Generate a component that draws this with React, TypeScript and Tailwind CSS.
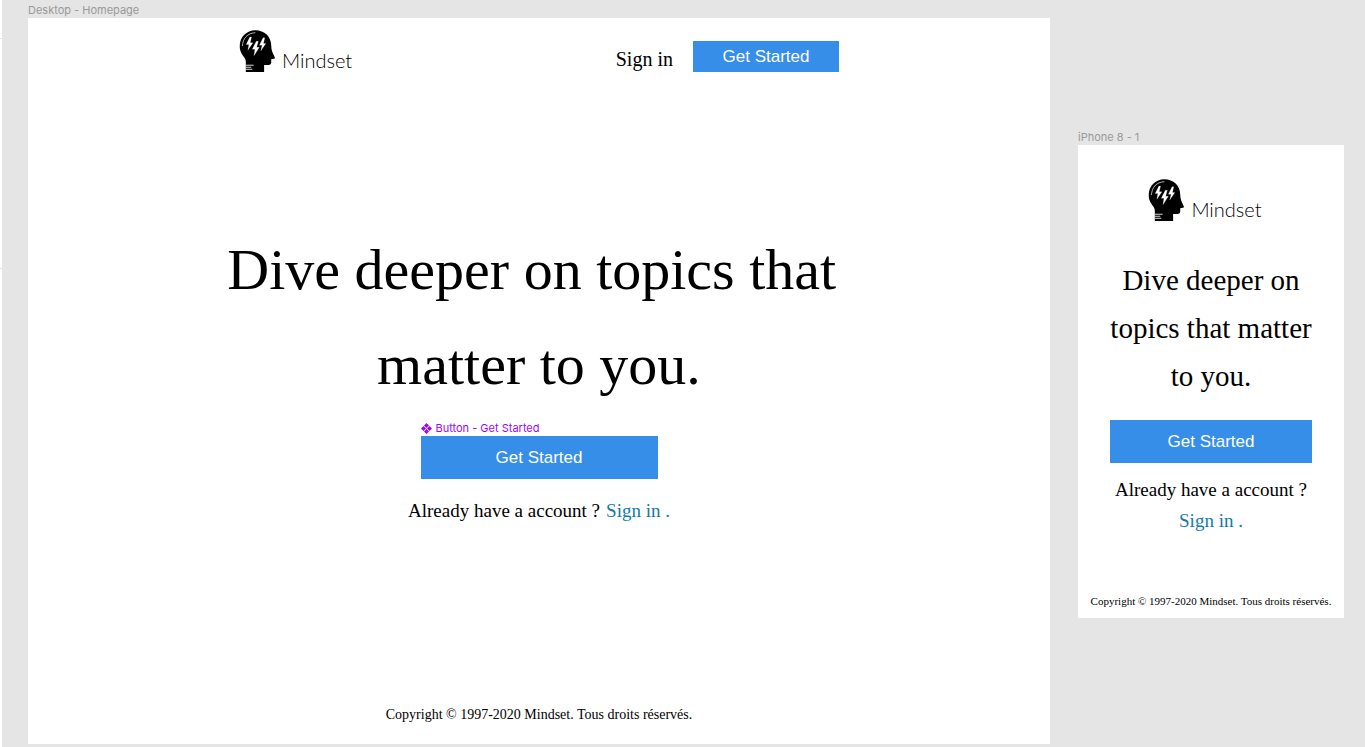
import React from "react";

function HeadMark() {
  return (
    <svg viewBox="0 0 106 124" className="h-[42px] w-9 shrink-0" aria-hidden="true">
      <path
        d="M48 1C75 1 95 20 95 46C95 53 96 59 98 64L106 82Q106 85 103 85L95 86V97Q95 103 88 103H74V124H20V94C20 86 16 82 11 75C5 67 2 58 2 48C2 21 22 1 48 1Z"
        fill="#000"
      />
      <path d="M10 46C11 25 25 9 47 8" fill="none" stroke="#fff" strokeWidth="2" strokeLinecap="round" />
      <path d="M32 21L21 43H29L26 60L41 38H33L37 21Z" fill="#fff" stroke="#fff" strokeWidth="0.5" />
      <path d="M51 33L39 57H47L44 76L60 51H52L57 33Z" fill="#fff" stroke="#fff" strokeWidth="0.5" />
      <path d="M71 23L60 45H68L64 62L79 40H72L76 23Z" fill="#fff" stroke="#fff" strokeWidth="0.5" />
      <path d="M20 104H43M20 110H36M20 116H39" stroke="#fff" strokeWidth="2.5" />
    </svg>
  );
}

function Logo() {
  return (
    <a href="#home" className="flex items-end gap-[7px] text-black">
      <HeadMark />
      <span className="font-[Lato,sans-serif] text-[20px] leading-6 font-light">Mindset</span>
    </a>
  );
}

function GetStarted({ className }: { className: string }) {
  return (
    <button
      type="button"
      className={
        "bg-[#368ee8] text-center font-['Liberation_Sans',sans-serif] text-[17px] text-white " + className
      }
    >
      Get Started
    </button>
  );
}

function Copyright({ className }: { className: string }) {
  return <footer className={"whitespace-nowrap text-center " + className}>Copyright © 1997-2020 Mindset. Tous droits réservés.</footer>;
}

export default function App() {
  return (
    <div className="flex min-h-screen bg-[#e5e5e5] font-['Liberation_Serif',serif] text-black">
      <aside className="w-[2px] shrink-0 bg-white pt-[38px]">
        <div className="h-[231px] border-y border-[#e5e5e5]" />
      </aside>

      <main className="flex flex-1 items-start gap-7 pr-[21px] pl-[26px]">
        <section className="min-w-0 flex-1">
          <h2 className="pt-[2px] font-[Inter,sans-serif] text-[11px] leading-4 text-[#999999]">Desktop - Homepage</h2>
          <div className="flex flex-col items-center bg-white pt-3 pb-[19px]">
            <header className="flex w-full max-w-[600px] items-end justify-between">
              <Logo />
              <nav className="flex items-end gap-5">
                <a href="#signin" className="text-[20px] leading-[26px]">
                  Sign in
                </a>
                <GetStarted className="h-[31px] w-[146px]" />
              </nav>
            </header>

            <h1 className="mt-[150px] text-center text-[58px] leading-[95px]">
              Dive deeper on topics that&nbsp;
              <br />
              matter to you.
            </h1>

            <div className="mt-2 flex w-[237px] flex-col">
              <div className="flex h-4 items-center gap-1 font-[Inter,sans-serif] text-[11px] text-[#9707ff]">
                <svg viewBox="0 0 11 11" className="size-[11px]" fill="currentColor" aria-hidden="true">
                  <path d="M5.5 0L8 2.5L5.5 5L3 2.5ZM5.5 6L8 8.5L5.5 11L3 8.5ZM2.5 3L5 5.5L2.5 8L0 5.5ZM8.5 3L11 5.5L8.5 8L6 5.5Z" />
                </svg>
                Button - Get Started
              </div>
              <GetStarted className="h-[43px] w-full" />
            </div>

            <p className="mt-5 flex gap-[6px] text-[19px] leading-6">
              Already have a account ?
              <a href="#signin" className="text-[#1579a8]">
                Sign in .
              </a>
            </p>

            <Copyright className="mt-[182px] text-[14px] leading-5" />
          </div>
        </section>

        <section className="mt-[127px] w-[266px] shrink-0">
          <h2 className="pt-[2px] font-[Inter,sans-serif] text-[11px] leading-4 text-[#999999]">iPhone 8 - 1</h2>
          <div className="flex flex-col items-center bg-white pt-[34px] pb-[9px]">
            <div className="pr-3">
              <Logo />
            </div>
            <h1 className="mt-[35px] px-6 text-center text-[29px] leading-[48px]">
              Dive deeper on topics that matter to&nbsp;you.
            </h1>
            <GetStarted className="mt-5 h-[43px] w-[202px]" />
            <p className="mt-[11px] flex flex-col items-center text-[19px] leading-[31px]">
              Already have a account ?
              <a href="#signin" className="text-[#1579a8]">
                Sign in .
              </a>
            </p>
            <Copyright className="mt-[57px] text-[11px] leading-4" />
          </div>
        </section>
      </main>
    </div>
  );
}
